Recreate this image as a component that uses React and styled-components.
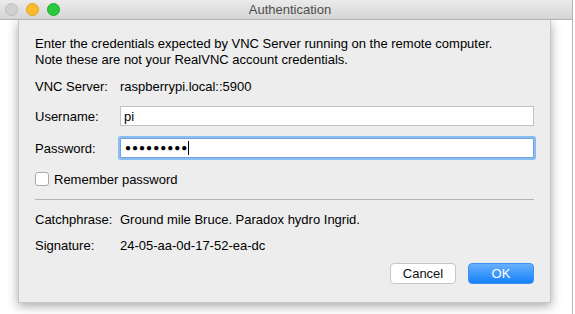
import React from 'react'
import styled, { createGlobalStyle } from 'styled-components';

const GlobalStyle = createGlobalStyle`
    html, body {
        margin: 0;
        padding: 0;
        background: #ffffff;
    }
    body {
        font-family: "Liberation Sans", Arial, sans-serif;
        font-size: 13px;
        color: #000;
    }
`

function App() {
    return (
        <>
            <GlobalStyle />
            <Window>
                <TitleBar>
                    <Lights>
                        <Light color={"#d0d0d0"} border={"#bdbdbd"} />
                        <Light color={"#fdbc2e"} border={"#dea123"} />
                        <Light color={"#29c93f"} border={"#1aab2a"} />
                    </Lights>
                    <Title>Authentication</Title>
                </TitleBar>
                <Content>
                    <Sheet>
                        <Intro>
                            Enter the credentials expected by VNC Server running on the remote computer.<br />
                            Note these are not your RealVNC account credentials.
                        </Intro>
                        <Row height={"20px"} top={"8px"}>
                            <Label>VNC Server:</Label>
                            <Value>raspberrypi.local::5900</Value>
                        </Row>
                        <Row height={"20px"} top={"10px"}>
                            <Label>Username:</Label>
                            <Field>pi</Field>
                        </Row>
                        <Row height={"20px"} top={"12px"}>
                            <Label>Password:</Label>
                            <Field focused>
                                <Dots>●●●●●●●●●</Dots>
                                <Caret />
                            </Field>
                        </Row>
                        <CheckRow>
                            <Checkbox />
                            <span>Remember password</span>
                        </CheckRow>
                        <Divider />
                        <Row height={"16px"} top={"11px"}>
                            <Label>Catchphrase:</Label>
                            <Value>Ground mile Bruce. Paradox hydro Ingrid.</Value>
                        </Row>
                        <Row height={"16px"} top={"10px"}>
                            <Label>Signature:</Label>
                            <Value>24-05-aa-0d-17-52-ea-dc</Value>
                        </Row>
                        <Buttons>
                            <Button>Cancel</Button>
                            <Button primary>OK</Button>
                        </Buttons>
                    </Sheet>
                </Content>
            </Window>
        </>
    )
}

export default App;

const Window = styled.div`
    width: 572px;
    height: 314px;
    border-right: 1px solid #b8b8b8;
    display: flex;
    flex-direction: column;
    background: #ffffff;
`

const TitleBar = styled.div`
    height: 19px;
    flex-shrink: 0;
    position: relative;
    display: flex;
    align-items: center;
    justify-content: center;
    background: linear-gradient(#ebebeb, #d5d5d5);
    border-bottom: 1px solid #b1b1b1;
`

const Lights = styled.div`
    position: absolute;
    left: 5px;
    top: 3px;
    display: flex;
    gap: 8px;
`

const Light = styled.div`
    width: 11px;
    height: 11px;
    border-radius: 50%;
    background: ${p => p.color};
    border: 0.5px solid ${p => p.border};
`

const Title = styled.div`
    font-size: 13px;
    color: #4d4d4d;
    padding-left: 8px;
`

const Content = styled.div`
    flex: 1;
    padding: 0 21px 11px 18px;
    display: flex;
`

const Sheet = styled.div`
    flex: 1;
    background: #ededed;
    box-shadow: 0 3px 10px rgba(0, 0, 0, 0.35);
    border: 1px solid #c7c7c7;
    border-top: none;
    padding: 16px 16px 0 16px;
    display: flex;
    flex-direction: column;
`

const Intro = styled.div`
    line-height: 16px;
`

const Row = styled.div`
    display: flex;
    align-items: center;
    height: ${p => p.height};
    margin-top: ${p => p.top};
`

const Label = styled.div`
    width: 85px;
    flex-shrink: 0;
`

const Value = styled.div``

const Field = styled.div`
    flex: 1;
    height: 20px;
    box-sizing: border-box;
    background: #fff;
    display: flex;
    align-items: center;
    padding-left: ${p => p.focused ? '4px' : '3px'};
    border: 1px solid ${p => p.focused ? '#6fa4e2' : '#c2c2c2'};
    box-shadow: ${p => p.focused ? '0 0 0 2px #8bbcf5' : 'none'};
    border-radius: ${p => p.focused ? '1px' : '0'};
`

const Dots = styled.span`
    font-size: 10px;
    letter-spacing: 1px;
    line-height: 1;
`

const Caret = styled.span`
    width: 1px;
    height: 14px;
    background: #000;
    margin-left: 0;
`

const CheckRow = styled.div`
    display: flex;
    align-items: center;
    gap: 5px;
    margin-top: 13px;
    height: 16px;
`

const Checkbox = styled.div`
    width: 12px;
    height: 12px;
    background: #fff;
    border: 1px solid #aaaaaa;
    border-radius: 3px;
`

const Divider = styled.div`
    height: 1px;
    background: #b4b4b4;
    margin-top: 12px;
`

const Buttons = styled.div`
    display: flex;
    justify-content: flex-end;
    gap: 12px;
    margin-top: 10px;
`

const Button = styled.div`
    width: 66px;
    height: 21px;
    box-sizing: border-box;
    display: flex;
    align-items: center;
    justify-content: center;
    border-radius: 4px;
    font-size: 13px;
    color: ${p => p.primary ? '#fff' : '#111'};
    background: ${p => p.primary ? 'linear-gradient(#68b0fb, #1580fb)' : '#ffffff'};
    border: 1px solid ${p => p.primary ? '#3d8ef5' : '#c6c6c6'};
`
